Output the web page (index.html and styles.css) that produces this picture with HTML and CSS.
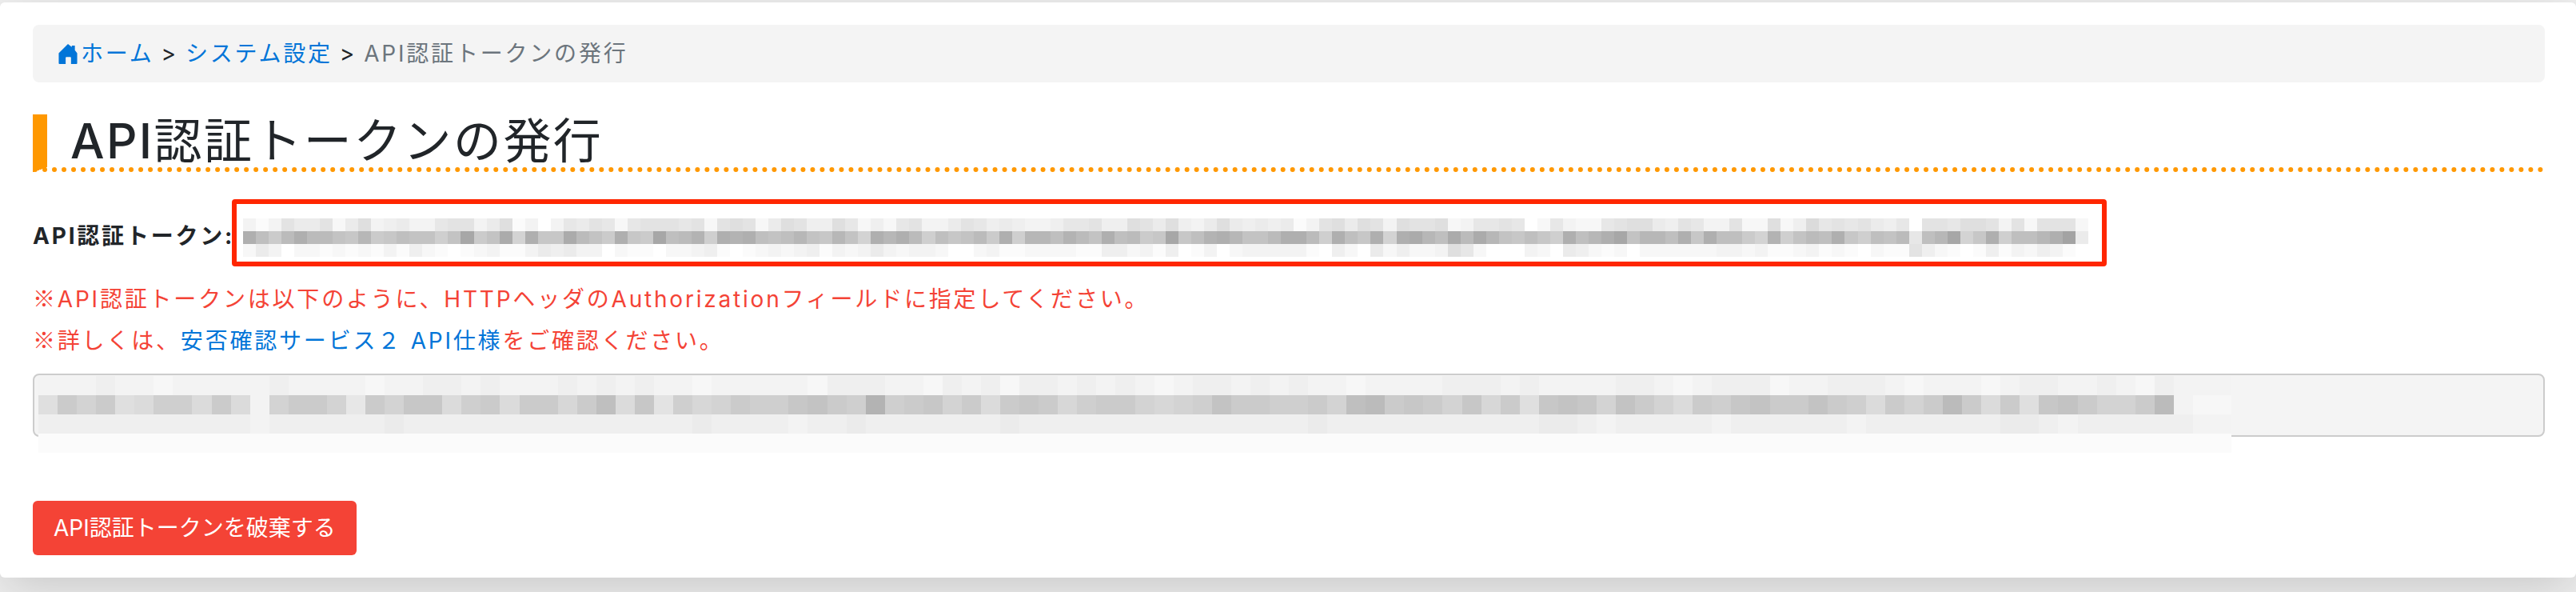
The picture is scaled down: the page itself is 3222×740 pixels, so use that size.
FILE: index.html
```html
<!DOCTYPE html>
<html lang="ja">
<head>
<meta charset="utf-8">
<title>API認証トークンの発行</title>
<link rel="stylesheet" href="styles.css">
</head>
<body>
<main class="card">
  <nav class="breadcrumb" aria-label="パンくず">
    <a href="#"><svg class="home-icon" viewBox="0 0 24 26" aria-hidden="true"><path d="M12 0 17 4V2h4v6l3 4v13q0 1-1 1h-7v-8q0-1-1-1h-5q-1 0-1 1v8H1q-1 0-1-1V12Z"/></svg>ホーム</a>
    <span>&gt;</span>
    <a href="#">システム設定</a>
    <span>&gt;</span>
    <span class="current">API認証トークンの発行</span>
  </nav>
  <h1 class="title"><span class="latin">API</span>認証トークンの発行</h1>
  <div class="token-row">
    <strong class="token-label">API認証トークン:</strong>
    <div class="token-box"><svg class="mosaic" id="token"></svg></div>
  </div>
  <div class="notes">
    <p><span class="mark">※</span>API認証トークンは以下のように、HTTPヘッダのAuthorizationフィールドに指定してください。</p>
    <p><span class="mark">※</span>詳しくは、<a href="#">安否確認サービス２ API仕様</a>をご確認ください。</p>
  </div>
  <div class="sample"><svg class="mosaic sample-mosaic" id="header"></svg></div>
  <button class="danger" type="button">API認証トークンを破棄する</button>
</main>
<script src="mosaic.js"></script>
</body>
</html>
```
FILE: styles.css
```css
* { box-sizing: border-box; }
body {
  margin: 0;
  padding-top: 3px;
  min-height: 100vh;
  overflow: hidden;
  background: #f0f0f0;
  color: #212529;
  font-family: Inter, "Noto Sans CJK JP", sans-serif;
  font-size: 28px;
  line-height: 40px;
  letter-spacing: 0.1em;
}
a { color: #0275d8; text-decoration: none; }
.card {
  padding: 28px 39px 28px 41px;
  background: #fff;
  border-radius: 6px;
  box-shadow: 0 16px 60px rgba(0, 0, 0, 0.16);
}
.breadcrumb {
  display: flex;
  gap: 9px;
  padding: 16px 32px;
  background: #f4f4f4;
  border-radius: 8px;
}
.home-icon {
  width: 24px;
  height: 25px;
  margin-right: 4px;
  vertical-align: -3px;
  fill: #0275d8;
}
.current { color: #6c757d; }
.title {
  margin: 40px 0 34px;
  padding-left: 29px;
  border-left: 18px solid #ff9800;
  border-bottom: 6px dotted #ff9800;
  font-size: 60px;
  font-weight: 400;
  line-height: 66px;
  letter-spacing: 0.04em;
}
.latin { font-weight: 500; }
.token-row { display: flex; align-items: center; }
.token-label {
  flex: none;
  margin-right: -3px;
  padding-top: 8px;
}
.token-box {
  padding: 18px 17px 6px 8px;
  border: 6px solid #ff2600;
  border-radius: 4px;
}
.mosaic { display: block; shape-rendering: crispEdges; }
.notes { margin: 15px 0; color: #f44336; line-height: 52px; }
.notes p { margin: 0; }
.mark { font-family: "Noto Sans CJK JP", sans-serif; line-height: 1; }
.sample {
  position: relative;
  height: 79px;
  margin-bottom: 80px;
  border: 2px solid #ccc;
  border-radius: 8px;
  background: #f4f4f4;
}
.sample-mosaic { position: absolute; top: 1px; left: 5px; }
.danger {
  display: block;
  padding: 14px 26px;
  border: 0;
  border-radius: 6px;
  background: #f44336;
  color: #fff;
  font: inherit;
  letter-spacing: normal;
}
```
FILE: mosaic.js
```js
// Each character is one cell in base 36: 0 is white, every step is 4 levels darker.
function drawMosaic(id, rows, width, cell) {
  const svg = document.getElementById(id);
  const cols = rows[0].length;
  svg.setAttribute('width', width);
  svg.setAttribute('height', rows.length * cell);
  svg.setAttribute('viewBox', `0 0 ${cols} ${rows.length}`);
  svg.setAttribute('preserveAspectRatio', 'none');
  rows.forEach((row, y) => {
    [...row].forEach((c, x) => {
      const g = 255 - parseInt(c, 36) * 4;
      const r = document.createElementNS('http://www.w3.org/2000/svg', 'rect');
      r.setAttribute('x', x);
      r.setAttribute('y', y);
      r.setAttribute('width', 1);
      r.setAttribute('height', 1);
      r.setAttribute('fill', `rgb(${g},${g},${g})`);
      svg.append(r);
    });
  });
}

drawMosaic('token', [
  '3137557258' + '3453367735' + '8130365762' + '6777672787' + '2587448624' + '2673357645' + '4334667448' + '7584358545' + '4513785873' + '8778236676' + '0263226788' + '5476337228' + '2496767546' + '0776887372' + '7772',
  'kgdhkhhfei' + 'degffcfmdf' + 'lbkeelhfdk' + 'edmghjckjk' + 'gfgifeifbk' + 'ikhcgefhdk' + 'ciigjhfkgh' + 'demegjkiff' + 'hkkhckgekb' + 'kliglhlife' + 'geckgikmfi' + 'igkekggdbj' + 'cfhgkecgfh' + '6gimbekcgg' + 'ikn5',
  '2530221212' + '1314210123' + '1135453302' + '1102234101' + '2323413235' + '3233200231' + '1222211442' + '3140130233' + '3331042052' + '4223862000' + '3205421202' + '2222233231' + '1231210211' + '7421014132' + '4310'
], 2308, 16);

drawMosaic('header', [
  '333433233333433332334434333434343323333324443324342443434323443434332333344434333344323444233444323332344334324333',
  '8dbd89cc9d' + '93bddb6dbe' + 'e9cd9ddadg' + '9e7cabdcce' + 'fdcjcdebd9' + 'dedacddbab' + 'cfddccdbgh' + 'dedbead8ef' + 'ebfdb9dcef' + 'ddfdc9dbdh' + 'd9d8efdbbd' + 'h322',
  '444444444443444444544444444444444454444344544444445444444444444444544444444444554344444344444434444444554344444433',
  '1'.repeat(114)
], 2743, 24);
```
